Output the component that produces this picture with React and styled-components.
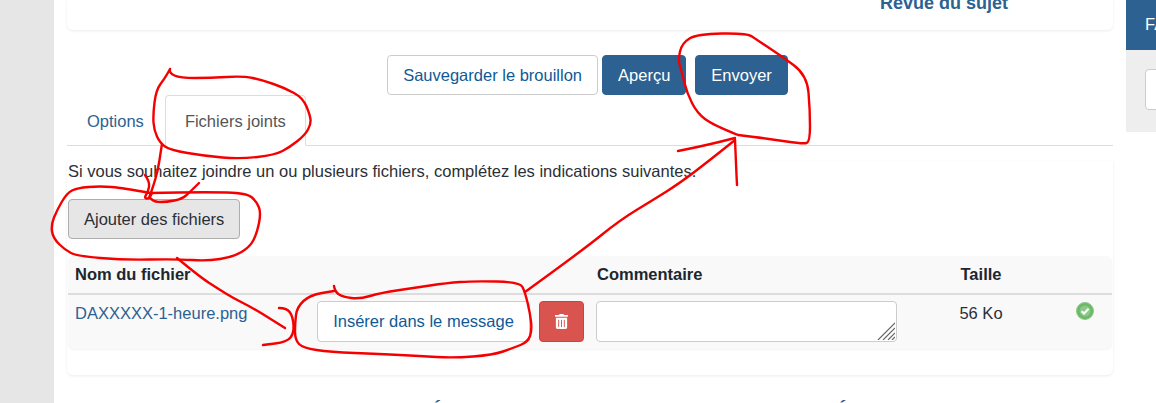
import styled, { createGlobalStyle } from 'styled-components';
import { FaTrashAlt } from 'react-icons/fa';

const BLUE = '#2c6191';

// hand drawn red marks, in page coordinates
const marks = [
  // tab circle
  [[170, 69], [169, 73], [180, 78], [210, 78], [243, 76], [262, 80], [285, 88], [303, 98], [310, 115], [311, 124], [305, 135], [290, 147], [275, 155], [240, 159], [205, 156], [170, 150], [160, 143], [154, 130], [153, 115], [156, 90], [165, 78], [170, 69]],
  [[162, 144], [161, 150], [158, 170], [153, 187], [149, 198]],
  [[145, 175], [150, 182], [148, 192], [144, 198], [149, 199], [152, 193]],
  [[199, 183], [190, 192], [182, 199], [167, 202], [155, 202], [150, 198]],
  // add button circle
  [[150, 193], [123, 188], [100, 186], [77, 188], [67, 193], [57, 210], [51, 225], [53, 238], [65, 250], [77, 256], [123, 260], [177, 259], [207, 261], [233, 257], [250, 247], [257, 233], [261, 213], [257, 202], [247, 193], [207, 192], [150, 193]],
  [[177, 258], [200, 277], [217, 288], [233, 298], [253, 308], [285, 328]],
  [[279, 308], [287, 308], [293, 317], [294, 333], [287, 342], [263, 345]],
  // insert button circle
  [[334, 286], [335, 292], [343, 297], [360, 299], [380, 293], [413, 288], [447, 283], [473, 281], [520, 282], [525, 292], [530, 313], [532, 330], [528, 342], [513, 348], [493, 355], [453, 358], [420, 356], [380, 354], [330, 352], [303, 348], [295, 340], [295, 323], [297, 307], [310, 295], [334, 291]],
  // arrow up to send
  [[525, 292], [583, 250], [620, 220], [653, 200], [680, 183], [710, 160], [735, 140]],
  [[678, 151], [703, 146], [735, 138]],
  [[735, 140], [736, 165], [737, 185]],
  // send circle
  [[738, 135], [713, 125], [697, 113], [687, 93], [682, 73], [678, 60], [682, 43], [697, 34], [747, 33], [757, 40], [780, 55], [807, 75], [810, 110], [810, 142], [803, 144], [770, 139], [738, 135]],
];

const toPath = (pts) => {
  let d = `M${pts[0][0]} ${pts[0][1]}`;
  for (let i = 1; i < pts.length - 1; i++) {
    const mx = (pts[i][0] + pts[i + 1][0]) / 2;
    const my = (pts[i][1] + pts[i + 1][1]) / 2;
    d += ` Q${pts[i][0]} ${pts[i][1]} ${mx} ${my}`;
  }
  const last = pts[pts.length - 1];
  return `${d} L${last[0]} ${last[1]}`;
};

const GlobalStyle = createGlobalStyle`
  html, body {
    margin: 0;
    padding: 0;
    background: #fff;
  }
  body {
    font-family: "Liberation Sans", Arial, sans-serif;
    font-size: 16.5px;
    line-height: 21px;
    color: #2b2f36;
  }
`;

const Page = styled.div`
  position: relative;
  display: flex;
  width: 1156px;
  height: 403px;
  overflow: hidden;
`;

const Gutter = styled.div`
  width: 54px;
  flex: none;
  background: #e6e6e6;
`;

const Main = styled.main`
  width: 1046px;
  flex: none;
  padding: 0 13px;
`;

const TopCard = styled.div`
  height: 30px;
  display: flex;
  justify-content: flex-end;
  padding-right: 105px;
  background: #fff;
  border-radius: 0 0 6px 6px;
  box-shadow: 0 1px 3px rgba(0, 0, 0, 0.08);
`;

const ReviewLink = styled.a`
  margin-top: -9px;
  font-size: 18px;
  font-weight: bold;
  line-height: 24px;
  color: ${BLUE};
`;

const Actions = styled.div`
  display: flex;
  justify-content: center;
  padding-right: 5px;
  margin-top: 25px;
`;

const Button = styled.button`
  height: 40px;
  padding: 0 15px;
  margin-right: ${(p) => p.$gap || 0}px;
  font: inherit;
  border-radius: 4px;
  border: 1px solid ${(p) => (p.$primary ? BLUE : '#ccc')};
  background: ${(p) => (p.$primary ? BLUE : '#fff')};
  color: ${(p) => (p.$primary ? '#fff' : '#0f5a96')};
`;

const AddButton = styled(Button)`
  display: block;
  margin-top: 17px;
  background: #e6e6e6;
  border-color: #adadad;
  color: #2b2f36;
`;

const TabList = styled.div`
  display: flex;
  height: 50px;
  border-bottom: 1px solid #ddd;
`;

const Tab = styled.a`
  display: flex;
  align-items: center;
  height: 51px;
  box-sizing: border-box;
  padding: 1px 19px 0;
  margin-right: 1px;
  border-radius: 4px 4px 0 0;
  border: 1px solid ${(p) => (p.$active ? '#ddd' : 'transparent')};
  border-bottom-color: ${(p) => (p.$active ? '#fff' : 'transparent')};
  background: ${(p) => (p.$active ? '#fff' : 'transparent')};
  color: ${(p) => (p.$active ? '#555' : BLUE)};
`;

const Panel = styled.section`
  padding: 0 1px 26px;
  border-radius: 0 0 6px 6px;
  box-shadow: 0 1px 3px rgba(0, 0, 0, 0.08);
`;

const Hint = styled.p`
  margin: 15px 0 0;
`;

const FileTable = styled.table`
  width: 1044px;
  margin-top: 17px;
  table-layout: fixed;
  border-collapse: separate;
  border-spacing: 0;
  background: #f9f9f9;
  border-radius: 6px;
  box-shadow: 0 1px 2px rgba(0, 0, 0, 0.05);
`;

const Th = styled.th`
  height: 37px;
  padding: 0 7px;
  text-align: ${(p) => p.$align || 'left'};
  font-weight: bold;
  color: #20262e;
  border-bottom: 2px solid #ddd;
`;

const Td = styled.td`
  height: 54px;
  box-sizing: border-box;
  padding: 6px 7px 7px;
  vertical-align: top;
  text-align: ${(p) => p.$align || 'left'};
`;

const FileLink = styled.a`
  display: block;
  margin-top: 2px;
  color: ${BLUE};
`;

const RowActions = styled.div`
  display: flex;
  gap: 9px;
`;

const InsertButton = styled(Button)`
  width: 213px;
  flex: none;
  padding: 0;
  height: 41px;
`;

const DeleteButton = styled.button`
  width: 45px;
  height: 41px;
  flex: none;
  padding: 0;
  display: flex;
  align-items: center;
  justify-content: center;
  border: 1px solid #d43f3a;
  border-radius: 4px;
  background: #d9534f;
  color: #fff;
  font-size: 15px;
`;

const CommentBox = styled.div`
  position: relative;
  width: 301px;
  margin-left: -1px;
`;

const Comment = styled.textarea`
  display: block;
  box-sizing: border-box;
  width: 301px;
  height: 41px;
  padding: 6px 12px;
  font: inherit;
  background: #fff;
  border: 1px solid #ccc;
  border-radius: 4px;
  resize: none;
`;

const Grip = styled.svg`
  position: absolute;
  right: 2px;
  bottom: 2px;
`;

const SizeText = styled.span`
  display: block;
  margin-top: 2px;
`;

const StatusIcon = styled.svg`
  display: block;
  margin: 1px 11px 0 auto;
`;

const Titles = styled.div`
  display: flex;
  gap: 392px;
  padding-left: 363px;
  margin-top: 24px;
`;

const Title = styled.h2`
  margin: 0;
  font-size: 20px;
  line-height: 24px;
  font-weight: bold;
  color: ${BLUE};
`;

const Side = styled.aside`
  width: 30px;
  flex: none;
  overflow: hidden;
`;

const SideHead = styled.div`
  height: 50px;
  padding: 14px 0 0 19px;
  box-sizing: border-box;
  background: ${BLUE};
  color: #fff;
`;

const SideBody = styled.div`
  height: 82px;
  box-sizing: border-box;
  padding: 19px 0 0 19px;
  background: #eee;
`;

const SearchInput = styled.input`
  display: block;
  box-sizing: border-box;
  width: 200px;
  height: 41px;
  background: #fff;
  border: 1px solid #ccc;
  border-radius: 4px;
`;

const Scribble = styled.svg`
  position: absolute;
  top: 0;
  left: 0;
  pointer-events: none;
`;

const App = () => {
  return (
    <Page>
      <GlobalStyle />
      <Gutter />
      <Main>
        <TopCard>
          <ReviewLink>Revue du sujet</ReviewLink>
        </TopCard>
        <Actions>
          <Button $gap={4}>Sauvegarder le brouillon</Button>
          <Button $primary $gap={9}>Aperçu</Button>
          <Button $primary>Envoyer</Button>
        </Actions>
        <TabList>
          <Tab>Options</Tab>
          <Tab $active>Fichiers joints</Tab>
        </TabList>
        <Panel>
          <Hint>Si vous souhaitez joindre un ou plusieurs fichiers, complétez les indications suivantes.</Hint>
          <AddButton>Ajouter des fichiers</AddButton>
          <FileTable>
            <colgroup>
              <col style={{ width: 242 }} />
              <col style={{ width: 280 }} />
              <col style={{ width: 320 }} />
              <col style={{ width: 142 }} />
              <col style={{ width: 60 }} />
            </colgroup>
            <thead>
              <tr>
                <Th>Nom du fichier</Th>
                <Th />
                <Th>Commentaire</Th>
                <Th $align="center">Taille</Th>
                <Th />
              </tr>
            </thead>
            <tbody>
              <tr>
                <Td><FileLink>DAXXXXX-1-heure.png</FileLink></Td>
                <Td>
                  <RowActions>
                    <InsertButton>Insérer dans le message</InsertButton>
                    <DeleteButton><FaTrashAlt /></DeleteButton>
                  </RowActions>
                </Td>
                <Td>
                  <CommentBox>
                    <Comment />
                    <Grip width="18" height="18" viewBox="0 0 18 18">
                      <path d="M1 18 L18 1 M6 18 L18 6 M11 18 L18 11 M15 18 L18 15" stroke="#666" strokeWidth="1.2" />
                    </Grip>
                  </CommentBox>
                </Td>
                <Td $align="center"><SizeText>56 Ko</SizeText></Td>
                <Td>
                  <StatusIcon width="18" height="18" viewBox="0 0 18 18">
                    <circle cx="9" cy="9" r="8.5" fill="#6cb868" stroke="#8fcb8c" />
                    <circle cx="9" cy="9" r="5.5" fill="#8ac987" />
                    <path d="M5.6 9.2 L8 11.5 L12.6 6.8" fill="none" stroke="#fff" strokeWidth="2.2" />
                  </StatusIcon>
                </Td>
              </tr>
            </tbody>
          </FileTable>
        </Panel>
        <Titles>
          <Title>É</Title>
          <Title>É</Title>
        </Titles>
      </Main>
      <Side>
        <SideHead>FA</SideHead>
        <SideBody>
          <SearchInput />
        </SideBody>
      </Side>
      <Scribble width="1156" height="403" viewBox="0 0 1156 403" fill="none">
        {marks.map((pts, i) => (
          <path key={i} d={toPath(pts)} stroke="#f50000" strokeWidth="2.4" strokeLinecap="round" strokeLinejoin="round" />
        ))}
      </Scribble>
    </Page>
  );
};

export default App;
